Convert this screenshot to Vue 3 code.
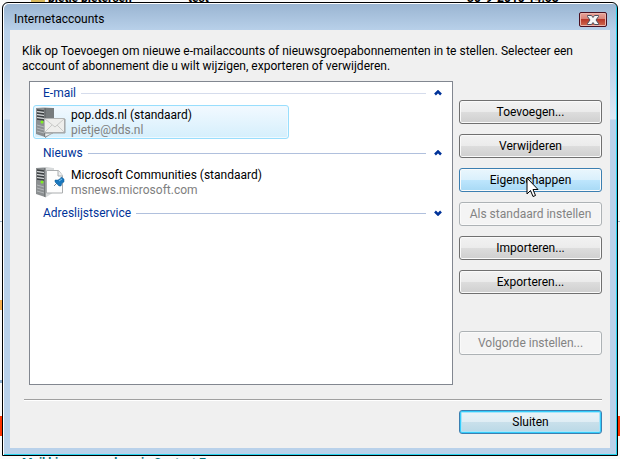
<template>
  <div class="desktop">
    <div class="backdrop" aria-hidden="true">
      <i class="folder"></i>
      <b class="snip sender">pietje pietersen</b>
      <b class="snip subject">test</b>
      <b class="snip date">30-9-2010 14:58</b>
      <i class="strip line"></i>
      <i class="strip orange"></i>
      <i class="strip blue"></i>
      <i class="strip red"></i>
      <b class="snip link">Mail binnen een domein Contact E</b>
    </div>

    <main class="window">
      <header class="titlebar">
        <h1>Internetaccounts</h1>
        <button class="close" type="button" aria-label="Sluiten">
          <svg width="12" height="10" viewBox="0 0 12 10">
            <path d="M.5 .5h4l1.500 2 1.500-2h4v1L9 5l2.500 3.500v1h-4L6 7.500l-1.500 2h-4v-1L3 5 .5 1.500z" fill="#f7f7f7" stroke="#4b5060" stroke-width="1" />
          </svg>
        </button>
      </header>

      <section class="body">
        <p class="intro">Klik op Toevoegen om nieuwe e-mailaccounts of nieuwsgroepabonnementen in te stellen. Selecteer een account of abonnement die u wilt wijzigen, exporteren of verwijderen.</p>

        <div class="content">
          <div class="list">
            <section v-for="g in groups" :key="g.name">
              <h2 class="group">
                <span>{{ g.name }}</span>
                <i class="rule" :class="{ pale: g.pale }"></i>
                <button class="toggle" type="button" :aria-label="g.name" :aria-expanded="g.open" @click="g.open = !g.open">
                  <svg width="8" height="6" viewBox="0 0 8 6" :class="{ down: !g.open }">
                    <path d="M1 4.500L4 1.500 7 4.500" fill="none" stroke="#003399" stroke-width="2.500" />
                  </svg>
                </button>
              </h2>
              <template v-if="g.open">
                <div v-for="a in g.accounts" :key="a.title" class="account" :class="{ selected: a.title === selected }" @click="selected = a.title">
                  <svg class="icon" width="32" height="32" viewBox="0 0 32 32">
                    <path d="M1 1h9v29L1 27z" fill="#8b8f91" />
                    <path d="M1 1h9l8-1H8z" fill="#c9cccd" />
                    <path d="M10 1l9 0v24l-9 6z" :fill="a.kind === 'mail' ? '#777c7e' : '#d7dadb'" />
                    <path d="M2 3l7 1M2 6l7 1M2 9l7 1M2 12l7 1" stroke="#3d4143" stroke-width="1.500" />
                    <path d="M2 4.500l7 1M2 7.500l7 1M2 10.500l7 1" stroke="#d5d8d9" stroke-width="1" />
                    <path d="M2 18l7 2M2 21l7 2M2 24l7 2" stroke="#b4b8ba" stroke-width="1" />
                    <path d="M10 1v29" stroke="#5d6163" stroke-width="1" />
                    <circle cx="7" cy="15" r="1.500" fill="#7df01e" />
                    <g v-if="a.kind === 'mail'">
                      <path d="M10 30v-4h8z" fill="#eceeee" stroke="#8b8f91" stroke-width=".5" />
                      <path d="M9.500 11.500h20v14h-20z" fill="#eeeeec" stroke="#b3b5b5" />
                      <path d="M10 12l10 8 9-8M10 25l7-7M29 25l-7-7" fill="none" stroke="#c9cac8" stroke-width="1" />
                      <path d="M10 26h20V12" fill="none" stroke="#9c9fa0" stroke-width="1" />
                    </g>
                    <g v-else>
                      <path d="M11.500 3.500h12l4 5v17.500h-16z" fill="#fdfdfd" stroke="#aaadaf" />
                      <path d="M23 3.500V9h5" fill="#eceff0" stroke="#aaadaf" />
                      <path d="M19 19l4-4" stroke="#7d8a96" stroke-width="1" />
                      <path d="M20 13l3 0 3-2v-1l3 2 0 3-2 1-1 3-2 0-4-4z" fill="#1977bd" stroke="#0f5c9a" stroke-width=".5" />
                      <path d="M24 14l3-2" stroke="#7ec3ef" stroke-width="1" />
                    </g>
                  </svg>
                  <div class="text">
                    <div>{{ a.title }}</div>
                    <div class="sub">{{ a.sub }}</div>
                  </div>
                </div>
              </template>
            </section>
          </div>

          <div class="actions">
            <button type="button" class="btn">Toevoegen...</button>
            <button type="button" class="btn">Verwijderen</button>
            <button type="button" class="btn hot">
              Eigenschappen
              <svg class="cursor" width="13" height="21" viewBox="0 0 13 21">
                <path d="M1 1v16l3.500-3.500 2.500 6 2.500-1L7 12.500h5z" fill="#fff" stroke="#000" />
              </svg>
            </button>
            <button type="button" class="btn" disabled>Als standaard instellen</button>
            <button type="button" class="btn">Importeren...</button>
            <button type="button" class="btn">Exporteren...</button>
            <button type="button" class="btn order" disabled>Volgorde instellen...</button>
          </div>
        </div>

        <hr class="divider">
        <footer class="footer">
          <button type="button" class="btn default">Sluiten</button>
        </footer>
      </section>
    </main>
  </div>
</template>

<script setup>
import { ref } from 'vue'

const selected = ref('pop.dds.nl (standaard)')

const groups = ref([
  {
    name: 'E-mail',
    open: true,
    pale: true,
    accounts: [{ title: 'pop.dds.nl (standaard)', sub: 'pietje@dds.nl', kind: 'mail' }]
  },
  {
    name: 'Nieuws',
    open: true,
    accounts: [{ title: 'Microsoft Communities (standaard)', sub: 'msnews.microsoft.com', kind: 'news' }]
  },
  { name: 'Adreslijstservice', open: false, accounts: [] }
])
</script>

<style>
body { margin: 0; background: #fff; }
</style>

<style scoped>
* { box-sizing: border-box; }
.desktop { position: relative; display: flex; min-height: 100vh; padding: 2px 2px 3px; overflow: hidden; font: 12px/15px Roboto, "Open Sans", sans-serif; color: #000; }

/* bits of the mail client behind the dialog */
.backdrop { position: absolute; inset: 0; overflow: hidden; background: #fafafa; }
.backdrop > * { position: absolute; }
.folder { left: 31px; top: 0; width: 14px; height: 2px; background: #d9b95c; }
.snip { white-space: nowrap; line-height: 14px; }
.sender { left: 48px; top: -9px; }
.subject { left: 188px; top: -9px; }
.date { left: 467px; top: -9px; }
.link { left: 22px; top: 456px; color: #00707c; }
.strip { left: 0; right: 0; }
.line { top: 221px; height: 1px; background: #9eb4cc; }
.orange { top: 300px; width: 2px; height: 10px; background: #f8b050; }
.blue { top: 380px; width: 2px; height: 3px; background: #8fb0d0; }
.red { top: 416px; height: 20px; background: #ff3300; }

.window { position: relative; display: flex; flex: 1; flex-direction: column; min-width: 0; padding: 0 7px 7px; border: 1px solid #000; border-radius: 6px 6px 0 0; box-shadow: inset 1px 1px #fff, inset -1px -1px #27d3ee; background: linear-gradient(#99b4d1 0, #b9d1ea 28px, #bdd3eb 60px, #dce8f5 116px, #b9d1ea 117px); }
.titlebar { display: flex; align-items: center; justify-content: space-between; height: 27px; padding: 6px 3px 0 4px; }
h1, h2, p { margin: 0; font-size: 12px; font-weight: 400; }
.close { display: flex; align-items: center; justify-content: center; width: 28px; height: 15px; padding: 0; border: 1px solid #4a1020; border-radius: 2px; background: linear-gradient(#e8a399 0, #d98378 45%, #b8382a 50%, #cf6a50 100%); box-shadow: inset 0 0 0 1px #eab5ad; }
.close svg { flex: none; }

.body { display: flex; flex: 1; flex-direction: column; padding: 14px 8px 14px 19px; background: #f0f0f0; }
.intro { padding: 0 20px 0 0; margin-left: -7px; }
.content { display: grid; flex: 1; grid-template-columns: 1fr 143px; gap: 6px; margin-top: 7px; }
.list { border: 1px solid #828790; background: #fff; }
.group { display: flex; align-items: center; height: 22px; padding: 0 10px 0 13px; color: #003399; }
.rule { flex: 1; height: 1px; margin: 0 8px 0 5px; background: #b0c0dd; }
.pale { background: #d5dcec; }
.toggle { display: flex; padding: 0; border: 0; background: none; }
.down { transform: rotate(180deg); }
.account { display: flex; gap: 4px; width: 256px; height: 34px; margin: 1px 0 3px 3px; padding: 1px; border: 1px solid transparent; border-radius: 3px; white-space: nowrap; }
.selected { border-color: #99defd; background: linear-gradient(#f2f9ff, #d5effc); box-shadow: inset 0 0 0 1px #eef9ff; }
.text { padding-top: 1px; }
.sub { color: #808080; }

.actions { display: flex; flex-direction: column; gap: 10px; padding-top: 19px; }
.btn { position: relative; height: 24px; padding: 1px 0 0; border: 1px solid #707070; border-radius: 3px; background: linear-gradient(#f2f2f2 0, #ebebeb 50%, #dddddd 50%, #cfcfcf 100%); box-shadow: inset 0 0 0 1px #fafafa; font: inherit; color: #000; white-space: nowrap; }
.btn:disabled { border-color: #adb2b5; background: #f4f4f4; color: #838383; }
.hot { border-color: #3c7fb1; background: linear-gradient(#eaf6fd 0, #d9f0fc 50%, #bee6fd 50%, #a7d9f5 100%); }
.cursor { position: absolute; left: 66px; top: 8px; }
.order { margin-top: 27px; }
.divider { align-self: stretch; width: auto; height: 2px; margin: 14px 0 0 -5px; border: 0; border-top: 1px solid #a0a0a0; border-bottom: 1px solid #fff; }
.footer { display: flex; justify-content: flex-end; margin-top: 9px; }
.default { width: 143px; border-color: #3c7fb1; background: linear-gradient(#ecf4f8 0, #dfedf4 50%, #c9e0eb 50%, #b9d8e6 100%); box-shadow: inset 0 0 0 1px #35cdfb, inset 0 0 0 2px #a8e5fa; }
</style>
